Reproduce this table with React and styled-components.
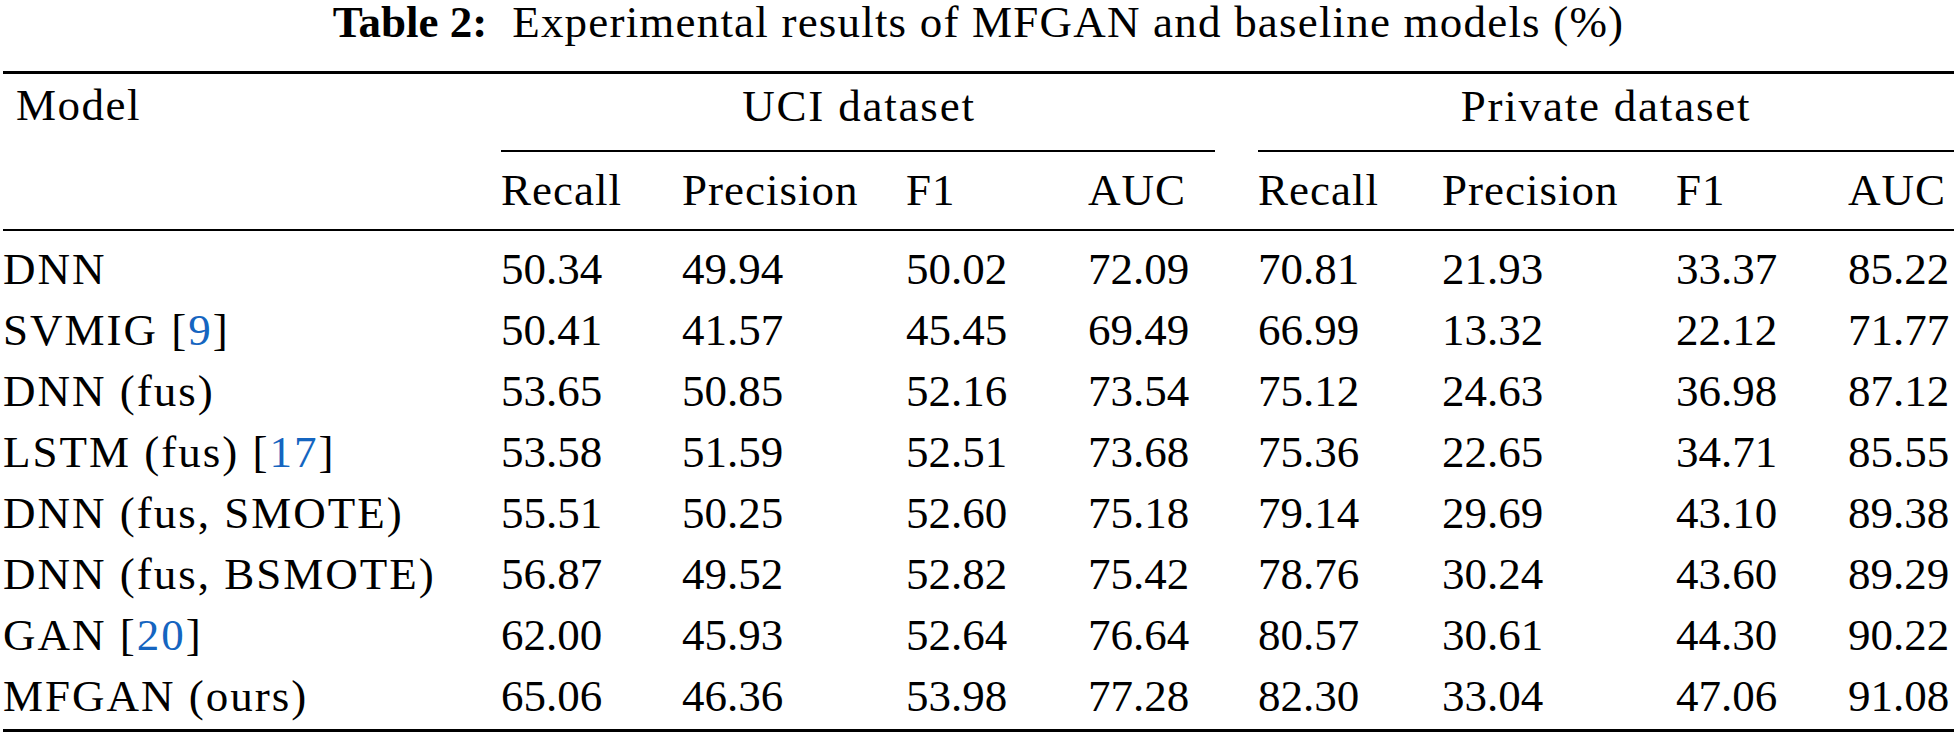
import React from "react";
import styled, { createGlobalStyle } from "styled-components";

const Global = createGlobalStyle`
  html, body { margin: 0; padding: 0; background: #fff; }
  body {
    font-family: "Liberation Serif", "Times New Roman", serif;
    color: #000;
  }
`;

const COLS = "498px 181px 224px 182px 170px 184px 234px 172px 1fr";

const Page = styled.div`
  width: 1954px;
  box-sizing: border-box;
  padding-left: 3px;
`;

const Caption = styled.div`
  font-size: 45px;
  line-height: 44px;
  text-align: center;
  margin-bottom: 27px;
  white-space: pre;
  letter-spacing: 1.2px;
`;

const CaptionLabel = styled.span`
  font-weight: bold;
  letter-spacing: 0;
`;

const Rule = styled.div`
  height: ${(p) => (p.$heavy ? 3 : 2)}px;
  background: #000;
`;

const Grid = styled.div`
  display: grid;
  grid-template-columns: ${COLS};
  font-size: 45px;
  line-height: 61px;
`;

const ModelHead = styled.div`
  grid-column: 1;
  grid-row: 1;
  padding-left: 13px;
  padding-top: 1px;
  letter-spacing: 1.5px;
`;

const GroupHead = styled.div`
  grid-column: ${(p) => p.$span};
  grid-row: 1;
  padding-top: 2px;
  padding-right: ${(p) => p.$trim || 0}px;
  text-align: center;
  letter-spacing: 1.8px;
`;

const CmidRule = styled.div`
  grid-column: ${(p) => p.$span};
  grid-row: 2;
  height: 2px;
  margin-top: 13px;
  margin-right: ${(p) => p.$trim || 0}px;
  background: #000;
`;

const ColHead = styled.div`
  grid-column: ${(p) => p.$col};
  grid-row: 3;
  padding-top: 8px;
  padding-bottom: 8px;
  white-space: nowrap;
  letter-spacing: 1px;
`;

const Body = styled(Grid)`
  padding-top: 8px;
  padding-bottom: 2px;
`;

const Cell = styled.div`
  white-space: nowrap;
  letter-spacing: ${(p) => (p.$label ? "2px" : "0")};
`;

const Ref = styled.span`
  color: #1565c0;
`;

const rows = [
  [["DNN"], "50.34", "49.94", "50.02", "72.09", "70.81", "21.93", "33.37", "85.22"],
  [["SVMIG [", "9", "]"], "50.41", "41.57", "45.45", "69.49", "66.99", "13.32", "22.12", "71.77"],
  [["DNN (fus)"], "53.65", "50.85", "52.16", "73.54", "75.12", "24.63", "36.98", "87.12"],
  [["LSTM (fus) [", "17", "]"], "53.58", "51.59", "52.51", "73.68", "75.36", "22.65", "34.71", "85.55"],
  [["DNN (fus, SMOTE)"], "55.51", "50.25", "52.60", "75.18", "79.14", "29.69", "43.10", "89.38"],
  [["DNN (fus, BSMOTE)"], "56.87", "49.52", "52.82", "75.42", "78.76", "30.24", "43.60", "89.29"],
  [["GAN [", "20", "]"], "62.00", "45.93", "52.64", "76.64", "80.57", "30.61", "44.30", "90.22"],
  [["MFGAN (ours)"], "65.06", "46.36", "53.98", "77.28", "82.30", "33.04", "47.06", "91.08"],
];

const heads = ["Recall", "Precision", "F1", "AUC", "Recall", "Precision", "F1", "AUC"];

function ModelName({ parts }) {
  if (parts.length === 1) return <>{parts[0]}</>;
  return (
    <>
      {parts[0]}
      <Ref>{parts[1]}</Ref>
      {parts[2]}
    </>
  );
}

export default function App() {
  return (
    <>
      <Global />
      <Page>
        <Caption>
          <CaptionLabel>Table 2:</CaptionLabel>
          {"  Experimental results of MFGAN and baseline models (%)"}
        </Caption>
        <Rule $heavy />
        <Grid>
          <ModelHead>Model</ModelHead>
          <GroupHead $span="2 / 6" $trim={41}>UCI dataset</GroupHead>
          <GroupHead $span="6 / 10">Private dataset</GroupHead>
          <CmidRule $span="2 / 6" $trim={43} />
          <CmidRule $span="6 / 10" />
          {heads.map((h, i) => (
            <ColHead key={i} $col={i + 2}>
              {h}
            </ColHead>
          ))}
        </Grid>
        <Rule />
        <Body>
          {rows.map((r, i) => (
            <React.Fragment key={i}>
              <Cell $label>
                <ModelName parts={r[0]} />
              </Cell>
              {r.slice(1).map((v, j) => (
                <Cell key={j}>{v}</Cell>
              ))}
            </React.Fragment>
          ))}
        </Body>
        <Rule $heavy />
      </Page>
    </>
  );
}
